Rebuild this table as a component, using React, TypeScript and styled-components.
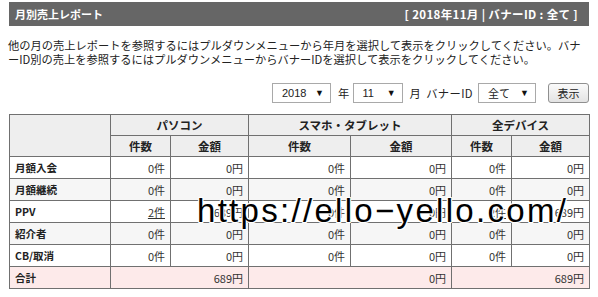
import * as React from 'react';
import styled, { createGlobalStyle } from 'styled-components';

const GlobalStyle = createGlobalStyle`
  html, body {
    margin: 0;
    padding: 0;
    background: #fff;
  }
  body {
    font-family: "Noto Sans CJK JP", "Noto Sans", sans-serif;
    color: #222;
  }
`;

const Page = styled('div')`
  position: relative;
  width: 580px;
  margin-left: 9px;
  padding-top: 2px;
`;

const TitleBar = styled('div')`
  display: flex;
  justify-content: space-between;
  align-items: center;
  height: 24px;
  padding: 0 11px 0 6px;
  background: #666666;
  color: #fff;
  font-size: 11px;
  font-weight: bold;
`;

const Period = styled('span')`
  letter-spacing: 0.35px;
  font-size: 11.5px;
`;

const Intro = styled('p')`
  margin: 12px 0 0 -1px;
  width: 582px;
  font-size: 11.25px;
  line-height: 14px;
  color: #222;
`;

const FilterRow = styled('div')`
  display: flex;
  justify-content: flex-end;
  align-items: center;
  margin-top: 17px;
  height: 20px;
  font-size: 11.25px;
`;

const Select = styled('div')<{ $width: number }>`
  box-sizing: border-box;
  display: flex;
  align-items: center;
  justify-content: space-between;
  width: ${p => p.$width}px;
  height: 20px;
  padding: 0 6px 0 9px;
  border: 1px solid #a9a9a9;
  background: #fff;
  font-family: "Liberation Sans", "Noto Sans CJK JP", sans-serif;
  font-size: 11px;
  color: #222;
`;

const Arrow = styled('span')`
  font-size: 9px;
  color: #111;
`;

const Label = styled('span')<{ $left: number; $right: number }>`
  margin: 0 ${p => p.$right}px 0 ${p => p.$left}px;
  letter-spacing: 0.4px;
  color: #222;
`;

const Button = styled('div')`
  box-sizing: border-box;
  display: flex;
  align-items: center;
  justify-content: center;
  width: 41px;
  height: 20px;
  margin-left: 12px;
  border: 1px solid #8f8f8f;
  border-radius: 3px;
  background: linear-gradient(#fafafa, #e3e3e3);
  font-size: 11px;
  color: #222;
`;

const Table = styled('table')`
  margin-top: 11px;
  width: 580px;
  border-collapse: collapse;
  table-layout: fixed;
  font-size: 11px;
  line-height: 14px;
`;

const HeadRow = styled('tr')`
  height: 21px;
`;

const Head = styled('th')`
  padding: 0;
  border: 1px solid #707070;
  background: #eeeeee;
  font-size: 11.5px;
  font-weight: bold;
  text-align: center;
  color: #222;
`;

const Row = styled('tr')<{ $tone: 'white' | 'gray' | 'pink' }>`
  height: 22px;
  background: ${p =>
    p.$tone === 'pink' ? '#fdeaea' : p.$tone === 'gray' ? '#f6f6f6' : '#ffffff'};
`;

const RowLabel = styled('th')`
  padding: 0 5px;
  border: 1px solid #707070;
  font-size: 10.5px;
  font-weight: bold;
  text-align: left;
  color: #222;
`;

const Cell = styled('td')`
  padding: 0 5px;
  border: 1px solid #707070;
  text-align: right;
  color: #333;
`;

const Link = styled('span')`
  text-decoration: underline;
  color: #333;
`;

const Watermark = styled('div')`
  position: absolute;
  left: 188px;
  top: 191px;
  font-family: "Liberation Sans", "Noto Sans CJK JP", sans-serif;
  font-size: 33px;
  line-height: 40px;
  letter-spacing: 2.3px;
  color: #000;
  white-space: nowrap;
  text-shadow: 1px 1px 0 #fff, -1px -1px 0 #fff, 1px -1px 0 #fff, -1px 1px 0 #fff;
  pointer-events: none;
`;

type Counts = [React.ReactNode, React.ReactNode, string, string, string, React.ReactNode, string];

const rows: { tone: 'white' | 'gray'; cells: Counts }[] = [
  { tone: 'white', cells: ['月額入会', '0件', '0円', '0件', '0円', '0件', '0円'] },
  { tone: 'gray', cells: ['月額継続', '0件', '0円', '0件', '0円', '0件', '0円'] },
  {
    tone: 'white',
    cells: ['PPV', <Link>2件</Link>, '689円', '0件', '0円', <Link>2件</Link>, '689円'],
  },
  { tone: 'gray', cells: ['紹介者', '0件', '0円', '0件', '0円', '0件', '0円'] },
  { tone: 'white', cells: ['CB/取消', '0件', '0円', '0件', '0円', '0件', '0円'] },
];

const App = () => {
  return (
    <Page>
      <GlobalStyle />
      <TitleBar>
        <span>月別売上レポート</span>
        <Period>[ 2018年11月 | バナーID : 全て ]</Period>
      </TitleBar>
      <Intro>
        他の月の売上レポートを参照するにはプルダウンメニューから年月を選択して表示をクリックしてください。バナーID別の売上を参照するにはプルダウンメニューからバナーIDを選択して表示をクリックしてください。
      </Intro>
      <FilterRow>
        <Select $width={59}>
          2018 <Arrow>▼</Arrow>
        </Select>
        <Label $left={7} $right={3}>年</Label>
        <Select $width={50}>
          11 <Arrow>▼</Arrow>
        </Select>
        <Label $left={7} $right={0}>月</Label>
        <Label $left={5} $right={5}>バナーID</Label>
        <Select $width={58}>
          全て <Arrow>▼</Arrow>
        </Select>
        <Button>表示</Button>
      </FilterRow>
      <Table>
        <colgroup>
          <col style={{ width: 101 }} />
          <col style={{ width: 60 }} />
          <col style={{ width: 78 }} />
          <col style={{ width: 102 }} />
          <col style={{ width: 101 }} />
          <col style={{ width: 60 }} />
          <col style={{ width: 78 }} />
        </colgroup>
        <thead>
          <HeadRow>
            <Head rowSpan={2} />
            <Head colSpan={2}>パソコン</Head>
            <Head colSpan={2}>スマホ・タブレット</Head>
            <Head colSpan={2}>全デバイス</Head>
          </HeadRow>
          <HeadRow>
            <Head>件数</Head>
            <Head>金額</Head>
            <Head>件数</Head>
            <Head>金額</Head>
            <Head>件数</Head>
            <Head>金額</Head>
          </HeadRow>
        </thead>
        <tbody>
          {rows.map((r, i) => (
            <Row key={i} $tone={r.tone}>
              <RowLabel>{r.cells[0]}</RowLabel>
              {r.cells.slice(1).map((c, j) => (
                <Cell key={j}>{c}</Cell>
              ))}
            </Row>
          ))}
          <Row $tone="pink">
            <RowLabel>合計</RowLabel>
            <Cell colSpan={2}>689円</Cell>
            <Cell colSpan={2}>0円</Cell>
            <Cell colSpan={2}>689円</Cell>
          </Row>
        </tbody>
      </Table>
      <Watermark>https://ello−yello.com/</Watermark>
    </Page>
  );
};

export default App;
